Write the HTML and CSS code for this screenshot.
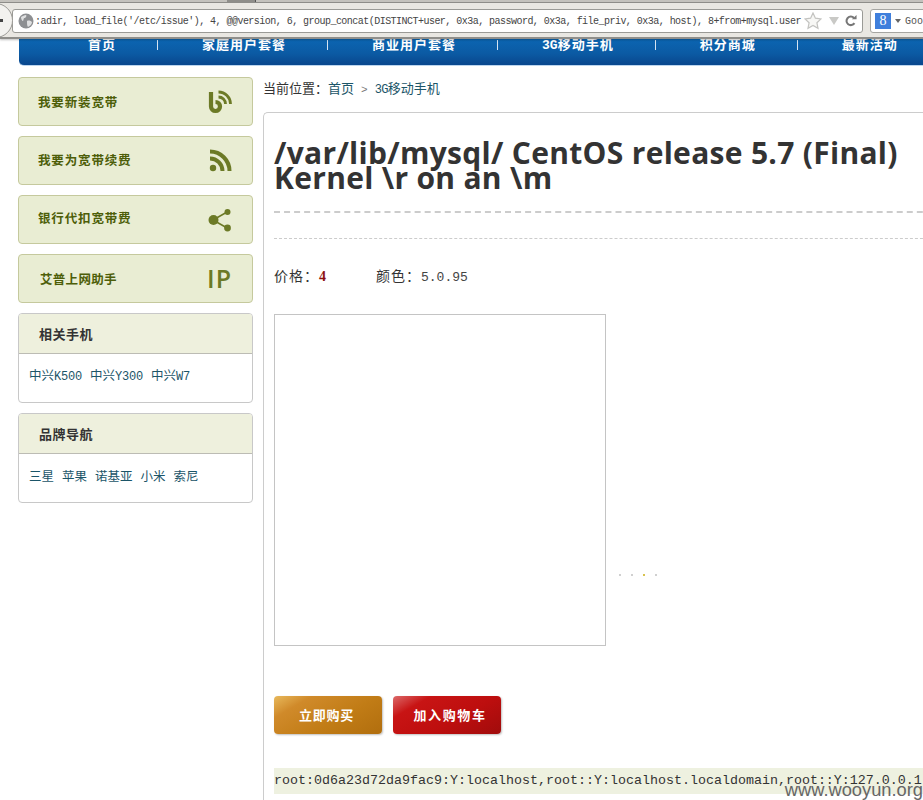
FILE: index.html
```html
<!DOCTYPE html>
<html lang="zh">
<head>
<meta charset="utf-8">
<title>3G移动手机</title>
<link rel="stylesheet" href="styles.css">
</head>
<body>
<div class="page">
  <header class="toolbar">
    <div class="tabline"><span class="tabstub"></span></div>
    <div class="toolrow">
      <span class="back"><span class="backbar"></span></span>
      <div class="urlbar">
        <svg class="globe" viewBox="0 0 16 16" width="16" height="16"><circle cx="8" cy="8" r="7.5" fill="#8d8f92"/><path d="M3 4c2-1 3-2 5-2 1 1 0 2-1 3-2 0-1 2-2 3-1 0-2-2-2-4zM9 8c2-1 4 0 5 1 0 2-2 4-4 5-1-1-1-3-1-6z" fill="#dfe0e1"/></svg>
        <span class="url">:adir, load_file('/etc/issue'), 4, @@version, 6, group_concat(DISTINCT+user, 0x3a, password, 0x3a, file_priv, 0x3a, host), 8+from+mysql.user</span>
        <svg class="star" viewBox="0 0 18 18" width="18" height="18"><path d="M9 1l2.4 5.2 5.6.7-4.1 3.8 1.1 5.6L9 13.500l-5 2.800 1.100-5.600L1 6.900l5.600-.7z" fill="#f7f7f5" stroke="#c3c3c0" stroke-width="1.200"/></svg>
        <svg class="drop" viewBox="0 0 10 8" width="10" height="8"><path d="M0 0h10L5 8z" fill="#c9c9c6"/></svg>
        <svg class="reload" viewBox="0 0 14 14" width="12" height="12"><path d="M11 9.500A5 5 0 1 1 10.500 3.500" fill="none" stroke="#777" stroke-width="2.400"/><path d="M8 5h5.500V0z" fill="#777"/></svg>
      </div>
      <div class="searchbar">
        <span class="gicon">8</span>
        <svg class="gdrop" viewBox="0 0 6 4" width="6" height="4"><path d="M0 0h6L3 4z" fill="#666"/></svg>
        <span class="gtext">Goo</span>
      </div>
    </div>
  </header>

  <nav class="nav">
    <a class="navitem">首页</a><i class="sep"></i>
    <a class="navitem">家庭用户套餐</a><i class="sep"></i>
    <a class="navitem">商业用户套餐</a><i class="sep"></i>
    <a class="navitem"><span class="navlat">3G</span>移动手机</a><i class="sep"></i>
    <a class="navitem">积分商城</a><i class="sep"></i>
    <a class="navitem">最新活动</a>
  </nav>

  <div class="main">
    <aside class="side">
      <a class="action">
        <span class="actlabel">我要新装宽带</span>
        <svg class="acticon" viewBox="0 0 26 26" width="26" height="26"><path d="M4 3v14.500a4.500 4.500 0 1 0 4.500-4.500" fill="none" stroke="#6c7a26" stroke-width="4.200"/><path d="M11.500 3a12 12 0 0 1 12 12M11.500 8a7 7 0 0 1 7 7" fill="none" stroke="#6c7a26" stroke-width="2.800"/></svg>
      </a>
      <a class="action">
        <span class="actlabel">我要为宽带续费</span>
        <svg class="acticon" viewBox="0 0 26 26" width="26" height="26"><circle cx="6" cy="20" r="3.200" fill="#6c7a26"/><path d="M3 10.500a12.500 12.500 0 0 1 12.500 12.500M3 3.500a19.500 19.500 0 0 1 19.500 19.500" fill="none" stroke="#6c7a26" stroke-width="4"/></svg>
      </a>
      <a class="action">
        <span class="actlabel">银行代扣宽带费</span>
        <svg class="acticon" viewBox="0 0 26 26" width="26" height="26"><path d="M6 13L21 4.500M6 13l15 8.500" stroke="#6c7a26" stroke-width="1.500"/><circle cx="6.500" cy="13" r="5" fill="#6c7a26"/><circle cx="20.500" cy="5" r="3" fill="#6c7a26"/><circle cx="20.500" cy="21" r="3.400" fill="#6c7a26"/></svg>
      </a>
      <a class="action action-ip">
        <span class="actlabel">艾普上网助手</span>
        <span class="iptext">IP</span>
      </a>

      <section class="box">
        <h3 class="boxhead">相关手机</h3>
        <p class="boxbody boxbody-first"><a>中兴<span class="lat">K500</span></a><a>中兴<span class="lat">Y300</span></a><a>中兴<span class="lat">W7</span></a></p>
      </section>
      <section class="box">
        <h3 class="boxhead">品牌导航</h3>
        <p class="boxbody"><a>三星</a><a>苹果</a><a>诺基亚</a><a>小米</a><a>索尼</a></p>
      </section>
    </aside>

    <main class="content">
      <div class="crumb">当前位置：<a>首页</a><span class="chev">&gt;</span><a><span class="crumblat">3G</span>移动手机</a></div>
      <article class="panel">
        <h1 class="title">/var/lib/mysql/ CentOS release 5.7 (Final) Kernel \r on an \m</h1>
        <div class="dash"></div>
        <div class="dots"></div>
        <div class="specs">
          <span>价格：<b class="price">4</b></span>
          <span>颜色：<span class="ver">5.0.95</span></span>
        </div>
        <div class="gallery">
          <div class="photo"></div>
          <div class="pager"><i></i><i></i><i class="on"></i><i></i></div>
        </div>
        <div class="buttons">
          <a class="btn btn-buy">立即购买</a>
          <a class="btn btn-cart">加入购物车</a>
        </div>
        <div class="output">root:0d6a23d72da9fac9:Y:localhost,root::Y:localhost.localdomain,root::Y:127.0.0.1</div>
      </article>
    </main>
  </div>
  <div class="watermark">www.wooyun.org</div>
</div>
</body>
</html>
```
FILE: styles.css
```css
* { box-sizing: border-box; }
html, body { margin: 0; padding: 0; height: 100%; overflow: hidden; background: #fff; }
body { font-family: "Noto Sans CJK SC", "Liberation Sans", sans-serif; font-size: 13px; color: #333; }
a { color: inherit; text-decoration: none; }
.page { position: relative; width: 923px; height: 800px; overflow: hidden; }

/* browser chrome */
.toolbar { height: 39px; background: #e9e7e2; border-bottom: 2px solid #8f8e8a; box-shadow: 0 1px 2px rgba(0,0,0,.25); position: relative; z-index: 2; }
.tabline { height: 3px; background: #c4c2bd; border-bottom: 1px solid #8e8d89; padding-left: 227px; }
.tabstub { display: block; width: 29px; height: 2px; background: #8f8e8a; border-right: 1px solid #555; }
.toolrow { display: flex; align-items: center; height: 24px; margin-top: 6px; position: relative; }
.back { position: absolute; left: -22px; top: -6px; width: 35px; height: 35px; border-radius: 50%; background: #f3f2ef; border: 1px solid #9b9a96; display: flex; align-items: center; justify-content: flex-end; padding-right: 9px; z-index: 1; }
.backbar { width: 5px; height: 3px; background: #444; }
.urlbar { margin-left: 12px; width: 851px; height: 24px; flex: none; background: #fff; border: 1px solid #9a9a96; border-radius: 3px; display: flex; align-items: center; padding-left: 5px; }
.globe { flex: none; }
.url { font-family: "Liberation Mono", monospace; font-size: 10px; letter-spacing: -.53px; color: #444; margin-left: 1px; white-space: nowrap; width: 767px; flex: none; overflow: hidden; }
.star { flex: none; margin-left: 2px; }
.drop { flex: none; margin-left: 7px; }
.reload { flex: none; margin-left: 6px; }
.searchbar { margin-left: 7px; width: 80px; height: 24px; background: #fff; border: 1px solid #a5a5a1; border-radius: 3px; display: flex; align-items: center; padding-left: 4px; flex: none; }
.gicon { width: 16px; height: 16px; background: #3f7fdc; color: #fff; font: 14px/16px "Liberation Serif", serif; text-align: center; flex: none; }
.gdrop { margin-left: 4px; flex: none; }
.gtext { font-family: "Liberation Mono", monospace; font-size: 10px; color: #555; margin-left: 4px; }

/* navigation */
.nav { margin-left: 19px; margin-top: -2px; width: 920px; height: 29px; padding-left: 25px; padding-bottom: 3px; display: flex; align-items: flex-start; color: #fff; font-weight: 700; font-size: 13px; line-height: 13px; letter-spacing: 1px; border-radius: 0 0 0 5px; background: linear-gradient(#0c67b4, #0b5aa3 60%, #09488f 96%); border-bottom: 1px solid #bcd5ee; white-space: nowrap; }
.navitem { padding: 0 42px 0 44px; display: block; flex: none; }
.navlat { font-family: "Liberation Mono", monospace; font-size: 13px; letter-spacing: 0; }
.sep { width: 1px; height: 10px; margin-top: 3px; background: #d5e4f3; flex: none; margin-left: -1px; }

/* layout */
.main { display: flex; align-items: flex-start; padding-left: 18px; margin-top: 11px; gap: 10px; }
.side { width: 235px; flex: none; display: flex; flex-direction: column; gap: 10px; }
.content { width: 700px; flex: none; }

/* sidebar actions */
.action { height: 49px; border: 1px solid #c5c99d; border-radius: 4px; background: #e9edd3; display: flex; align-items: center; justify-content: space-between; padding: 0 19px 0 19px; }
.actlabel { color: #4d5e08; font-weight: 700; font-size: 12.500px; letter-spacing: .85px; }
.action:nth-child(2) .actlabel { margin-bottom: 2px; }
.action:nth-child(3) .actlabel { margin-bottom: 4px; }
.acticon { flex: none; }
.action-ip { padding-left: 21px; }
.action-ip .actlabel { letter-spacing: .3px; }
.iptext { font-family: "Open Sans", sans-serif; font-weight: 600; font-size: 25px; line-height: 1; color: #6c7a26; letter-spacing: 1px; margin-right: 1px; }

/* sidebar boxes */
.box { border: 1px solid #c8c8c8; border-radius: 4px; overflow: hidden; }
.boxhead { margin: 0; height: 40px; line-height: 39px; padding-left: 20px; font-size: 13px; letter-spacing: .5px; font-weight: 700; color: #333; background: #eef0dd; border-bottom: 1px solid #bcbcb4; }
.boxbody { margin: 0; height: 48px; padding: 13px 0 0 10px; font-size: 12.500px; line-height: 18px; color: #1b5568; display: flex; gap: 8px; }
.boxbody-first { padding-top: 12px; }
.lat { font-family: "Liberation Mono", monospace; font-size: 12px; letter-spacing: -.2px; }

/* breadcrumb */
.crumb { height: 35px; line-height: 22px; font-size: 13px; color: #333; }
.crumb a { color: #1b5568; }
.chev { margin: 0 7px; color: #777; font-family: "Liberation Mono", monospace; font-size: 11px; }
.crumblat { font-family: "Liberation Mono", monospace; font-size: 12px; letter-spacing: -.7px; }

/* product panel */
.panel { border: 1px solid #ccc; border-right: 0; border-bottom: 0; border-radius: 5px 0 0 0; padding: 27px 0 0 10px; height: 700px; }
.title { margin: 0; width: 645px; font-family: "Open Sans", sans-serif; font-weight: 700; font-size: 30px; letter-spacing: .3px; line-height: 25px; color: #333; }
.dash { margin-top: 21px; height: 0; border-top: 2px dashed #ccc; }
.dots { margin-top: 25px; height: 0; border-top: 1px dashed #ccc; }
.specs { margin-top: 25px; height: 23px; line-height: 22px; font-size: 14px; letter-spacing: 1px; display: flex; gap: 49px; }
.price { color: #8c1010; font-family: "Liberation Serif", serif; font-size: 14px; }
.ver { font-family: "Liberation Mono", monospace; font-size: 13px; letter-spacing: 0; color: #444; }
.gallery { margin-top: 27px; display: flex; align-items: flex-end; }
.photo { width: 332px; height: 332px; border: 1px solid #c4c4c4; flex: none; }
.pager { display: flex; gap: 10px; margin-left: 13px; padding-bottom: 70px; }
.pager i { width: 2px; height: 2px; background: #d0d0d0; }
.pager .on { background: #d8c24e; }
.buttons { margin-top: 50px; display: flex; gap: 11px; }
.btn { width: 108px; height: 38px; border-radius: 4px; display: flex; align-items: center; justify-content: center; color: #fff; font-weight: 700; font-size: 13px; box-shadow: 1px 1px 2px rgba(0,0,0,.25); }
.btn-buy { letter-spacing: .8px; padding-right: 3px; padding-bottom: 2px; background: linear-gradient(150deg, #e8b95c 0, #d08a2a 22%, #c17c16 60%, #b16e0e 100%); }
.btn-cart { letter-spacing: 1.600px; padding-left: 6px; padding-bottom: 2px; background: linear-gradient(150deg, #dc6a6a 0, #c81414 22%, #bd0e0e 60%, #a00c0c 100%); }
.output { margin-top: 34px; width: 660px; height: 26px; line-height: 26px; background: #eef1e0; font-family: "Liberation Mono", monospace; font-size: 13.330px; color: #333; white-space: nowrap; }

/* watermark */
.watermark { position: absolute; right: 0; bottom: -1px; font-family: "Liberation Sans", sans-serif; font-size: 18.300px; line-height: 22px; color: #666; white-space: nowrap; z-index: 3; }
```
